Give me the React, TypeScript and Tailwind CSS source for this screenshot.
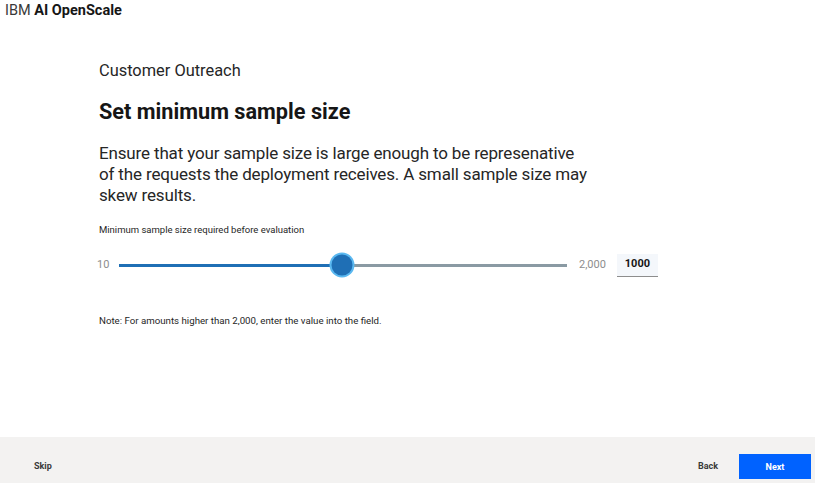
import React from "react";

const font = { fontFamily: 'Roboto, "Noto Sans", Arial, sans-serif' };

export default function App() {
  const min = 10;
  const max = 2000;
  const value = 1000;
  const pct = ((value - min) / (max - min)) * 100;

  return (
    <div className="w-[815px] h-[483px] bg-white flex flex-col text-[#161616]" style={font}>
      {/* Top bar */}
      <header className="h-[24px] pl-[5px] pt-[1px] text-[14.5px] leading-[20px]">
        <span className="text-[#393939]">IBM </span>
        <span className="font-bold">AI OpenScale</span>
      </header>

      {/* Content */}
      <main className="flex-1 pl-[99px] pt-[37px]">
        <p className="text-[16.4px] leading-[20px] text-[#262626]">Customer Outreach</p>
        <h1 className="mt-[17px] text-[21.7px] leading-[28px] font-bold">Set minimum sample size</h1>
        <p className="mt-[17px] w-[492px] text-[17px] tracking-[-0.15px] leading-[21px] text-[#262626]">
          Ensure that your sample size is large enough to be represenative of the requests the deployment
          receives. A small sample size may skew results.
        </p>

        <p className="mt-[17px] text-[9.5px] leading-[14px] text-[#262626]">
          Minimum sample size required before evaluation
        </p>

        <div className="mt-[16px] flex items-center h-[24px]">
          <span className="w-[20px] text-[11px] text-[#8d8d8d] -ml-[2px]">10</span>
          <div className="relative ml-[2px] w-[448px] h-[3px] bg-[#8a9aa3]">
            <div className="absolute left-0 top-0 h-[3px] bg-[#1f6fb5]" style={{ width: `${pct}%` }} />
            <div
              className="absolute top-1/2 w-[21px] h-[21px] -translate-x-1/2 -translate-y-1/2 rounded-full bg-[#1f6fb5] ring-2 ring-[#5ab8f0]"
              style={{ left: `${pct}%` }}
            />
          </div>
          <span className="ml-[12px] text-[11px] text-[#8d8d8d]">2,000</span>
          <div className="ml-[11px] w-[41px] h-[23px] bg-[#f4f7fb] border-b border-[#8d8d8d] flex items-center justify-center text-[11px] font-bold">
            1000
          </div>
        </div>

        <p className="mt-[37px] text-[9.7px] leading-[14px] text-[#262626]">
          Note: For amounts higher than 2,000, enter the value into the field.
        </p>
      </main>

      {/* Footer */}
      <footer className="h-[46px] bg-[#f3f2f1] flex items-end pb-[4px]">
        <button className="ml-[34px] mb-[6px] text-[9px] font-bold text-[#393939]">Skip</button>
        <div className="ml-auto flex items-end">
          <button className="mr-[21px] mb-[6px] text-[9px] font-bold text-[#393939]">Back</button>
          <button className="mr-[4px] w-[72px] h-[25px] pt-[2px] bg-[#0062ff] text-white text-[9px] font-bold">
            Next
          </button>
        </div>
      </footer>
    </div>
  );
}
